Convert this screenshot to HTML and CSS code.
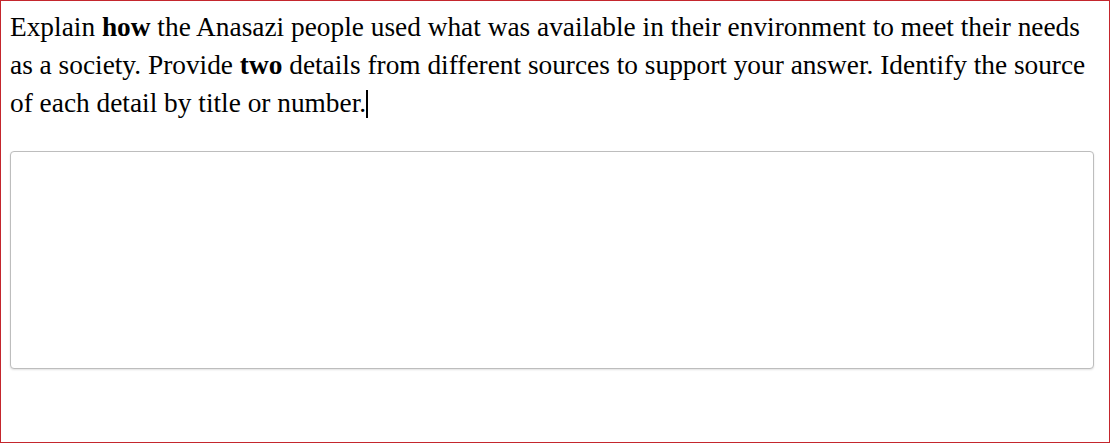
FILE: index.html
```html
<!DOCTYPE html>
<html>
<head>
<meta charset="utf-8">
<link rel="stylesheet" href="styles.css">
</head>
<body>
<div class="frame">
  <p class="prompt">Explain <b>how</b> the Anasazi people used what was available in their environment to meet their needs as a society. Provide <b>two</b> details from different sources to support your answer. Identify the source of each detail by title or number.<span class="caret"></span></p>
  <textarea class="answer"></textarea>
</div>
</body>
</html>
```
FILE: styles.css
```css
html, body {
  margin: 0;
  padding: 0;
  background: #fff;
}
.frame {
  box-sizing: border-box;
  width: 1110px;
  height: 443px;
  border: 1px solid #c4262d;
  padding: 7px 15px 0 9px;
}
.prompt {
  margin: 0;
  font-family: "Liberation Serif", "Times New Roman", serif;
  font-size: 27.35px;
  line-height: 38px;
  color: #000;
}
.prompt b {
  font-weight: bold;
}
.caret {
  display: inline-block;
  width: 0;
  height: 28px;
  border-left: 2px solid #000;
  vertical-align: -6px;
}
.answer {
  display: block;
  box-sizing: border-box;
  width: 1084px;
  height: 218px;
  margin-top: 29px;
  border: 1px solid #bdbdbd;
  border-radius: 4px;
  box-shadow: 0 1px 2px rgba(0,0,0,0.12);
  resize: none;
  background: #fff;
}
```
